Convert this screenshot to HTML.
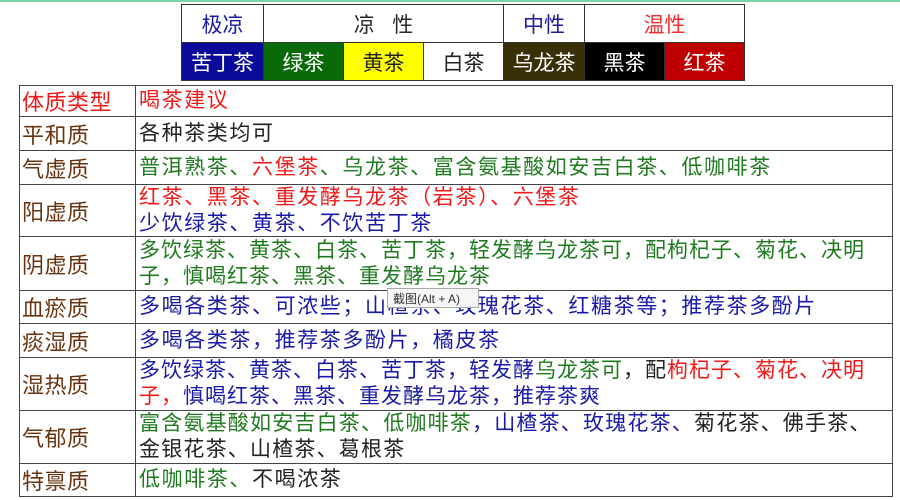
<!DOCTYPE html>
<html><head><meta charset="utf-8"><style>
body{margin:0;width:900px;height:500px;background:#fff;position:relative;overflow:hidden;font-family:"Liberation Sans","Noto Sans CJK SC",sans-serif;}
.top{position:absolute;left:0;top:0;width:900px;height:2px;background:#7fd0a8;}
.c{position:absolute;box-sizing:border-box;border:1px solid #333;display:flex;align-items:center;justify-content:center;font-size:21px;}
.r{position:absolute;left:19px;width:874px;box-sizing:border-box;border:1px solid #444;border-top:none;display:flex;}
.r .a{width:116px;border-right:1.5px solid #444;display:flex;align-items:center;padding-left:2px;font-size:22px;color:#6b3410;box-sizing:border-box;letter-spacing:0.5px}
.r .b{flex:1;padding-left:3px;font-size:21px;line-height:26px;letter-spacing:1.6px;display:flex;flex-direction:column;justify-content:center;white-space:nowrap}
.g{color:#1f7a1f}.rd{color:#f01818}.bl{color:#1a1aa8}.k{color:#222}
</style></head><body>
<div class="top"></div>
<div class="c" style="left:181px;top:4px;width:83px;height:39px;color:#1a1aa0">极凉</div>
<div class="c" style="left:263px;top:4px;width:241px;height:39px;color:#2a2a2a">凉&nbsp;&nbsp;&nbsp;性</div>
<div class="c" style="left:503px;top:4px;width:82px;height:39px;color:#1a1aa0">中性</div>
<div class="c" style="left:584px;top:4px;width:161px;height:39px;color:#f03030">温性</div>
<div class="c" style="left:181px;top:42px;width:83px;height:39px;background:#0a0a9a;color:#fff">苦丁茶</div>
<div class="c" style="left:263px;top:42px;width:81px;height:39px;background:#0a6a0a;color:#fff">绿茶</div>
<div class="c" style="left:343px;top:42px;width:81px;height:39px;background:#ffff00;color:#222">黄茶</div>
<div class="c" style="left:423px;top:42px;width:81px;height:39px;background:#fff;color:#222">白茶</div>
<div class="c" style="left:503px;top:42px;width:82px;height:39px;background:#3a3008;color:#fff">乌龙茶</div>
<div class="c" style="left:584px;top:42px;width:81px;height:39px;background:#000;color:#fff">黑茶</div>
<div class="c" style="left:664px;top:42px;width:81px;height:39px;background:#c00000;color:#fff">红茶</div>

<div class="r" style="top:85px;height:32px;border-top:1px solid #444"><div class="a" style="color:#f01818">体质类型</div><div class="b rd">喝茶建议</div></div>
<div class="r" style="top:117px;height:34px"><div class="a">平和质</div><div class="b k">各种茶类均可</div></div>
<div class="r" style="top:151px;height:34px"><div class="a">气虚质</div><div class="b g"><span>普洱熟茶、<span class="rd">六堡茶</span>、乌龙茶、富含氨基酸如安吉白茶、低咖啡茶</span></div></div>
<div class="r" style="top:185px;height:52px"><div class="a">阳虚质</div><div class="b"><span class="rd">红茶、黑茶、重发酵乌龙茶（岩茶）、六堡茶</span><span class="bl">少饮绿茶、黄茶、不饮苦丁茶</span></div></div>
<div class="r" style="top:237px;height:54px"><div class="a">阴虚质</div><div class="b g" style="letter-spacing:1px"><span>多饮绿茶、黄茶、白茶、苦丁茶，轻发酵乌龙茶可，配枸杞子、菊花、决明</span><span>子，慎喝红茶、黑茶、重发酵乌龙茶</span></div></div>
<div class="r" style="top:291px;height:33px"><div class="a">血瘀质</div><div class="b bl">多喝各类茶、可浓些；山楂茶、玫瑰花茶、红糖茶等；推荐茶多酚片</div></div>
<div class="r" style="top:324px;height:34px"><div class="a">痰湿质</div><div class="b bl">多喝各类茶，推荐茶多酚片，橘皮茶</div></div>
<div class="r" style="top:358px;height:53px"><div class="a">湿热质</div><div class="b bl" style="letter-spacing:1px"><span>多饮绿茶、黄茶、白茶、苦丁茶，轻发酵<span class="g">乌龙茶可</span><span class="k">，配</span><span class="rd">枸杞子、菊花、决明</span></span><span><span class="rd">子，</span>慎喝红茶、黑茶、重发酵乌龙茶，推荐茶爽</span></div></div>
<div class="r" style="top:411px;height:53px"><div class="a">气郁质</div><div class="b k" style="letter-spacing:1.2px"><span><span class="g">富含氨基酸如安吉白茶、低咖啡茶</span><span class="bl">，山楂茶、玫瑰花茶、</span>菊花茶、佛手茶、</span><span>金银花茶、山楂茶、葛根茶</span></div></div>
<div class="r" style="top:464px;height:33px"><div class="a">特禀质</div><div class="b k"><span><span class="g">低咖啡茶、</span>不喝浓茶</span></div></div>

<div style="position:absolute;left:387px;top:288px;width:92px;height:20px;background:#f6f6f6;border:1px solid #aaa;font-size:12px;color:#333;line-height:20px;padding-left:5px;box-sizing:border-box">截图(Alt + A)</div>
</body></html>
